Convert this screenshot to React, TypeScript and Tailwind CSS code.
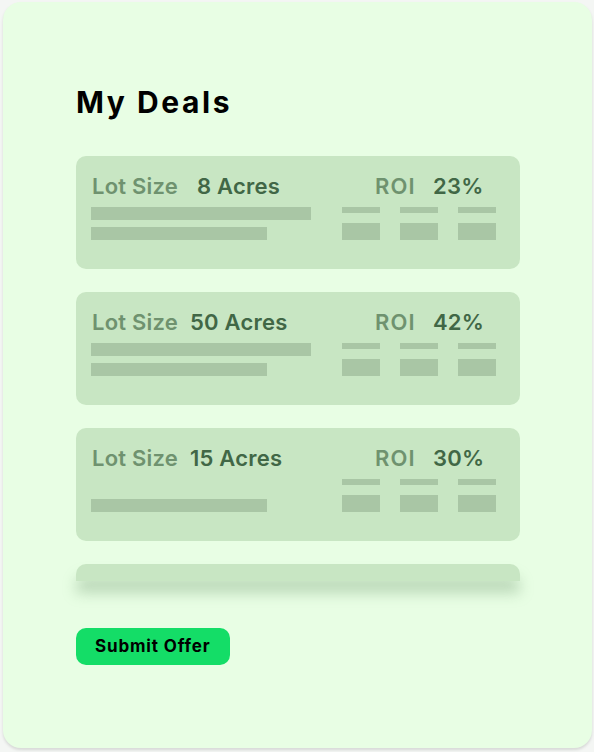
const deals = [
  { size: "8 Acres", roi: "23%", gap: "ml-[19px]", twoBars: true },
  { size: "50 Acres", roi: "42%", gap: "ml-[12px]", twoBars: true },
  { size: "15 Acres", roi: "30%", gap: "ml-[12px]", twoBars: false },
];

function DealCard({ deal }: { deal: (typeof deals)[number] }) {
  return (
    <div className="h-[113px] rounded-[10px] bg-[#c8e6c3] pl-[16px] pt-[16px]">
      <div className="flex h-[28px] items-center text-[22px] font-semibold leading-[28px] tracking-[0.01em]">
        <div className="flex w-[250px] items-center">
          <span className="inline-block w-[86px] whitespace-nowrap text-[#6f926f]">Lot Size</span>
          <span className={`${deal.gap} text-[#416746]`}>{deal.size}</span>
        </div>
        <div className="flex items-center pl-[33px]">
          <span className="inline-block w-[43px] tracking-[0.05em] text-[#6f926f]">ROI</span>
          <span className="ml-[15px] text-[#416746]">{deal.roi}</span>
        </div>
      </div>
      <div className="-ml-[1px] mt-[7px] flex">
        <div className="flex w-[220px] flex-col">
          <div className={`h-[13px] w-[220px] ${deal.twoBars ? "bg-[#a9c6a5]" : "bg-transparent"}`} />
          <div className="mt-[7px] h-[13px] w-[176px] bg-[#a9c6a5]" />
        </div>
        <div className="ml-[31px] flex gap-[20px]">
          {[0, 1, 2].map((i) => (
            <div key={i} className="flex w-[38px] flex-col">
              <div className="h-[6px] bg-[#a9c6a5]" />
              <div className="mt-[10px] h-[17px] bg-[#a9c6a5]" />
            </div>
          ))}
        </div>
      </div>
    </div>
  );
}

export default function App() {
  return (
    <div className="min-h-[752px] bg-[#f4f6f4] pb-[4px] pl-[3px] pr-[2px] pt-[2px]" style={{ fontFamily: "Inter, 'Noto Sans', sans-serif" }}>
      <div className="h-[746px] rounded-[18px] bg-[#e8fee4] pl-[73px] pt-[80px] shadow-[0_2px_3px_rgba(0,0,0,0.12)]">
        <h1 className="text-[30px] font-bold leading-[40px] tracking-[0.085em] text-black">My Deals</h1>
        <div className="mt-[34px] flex w-[444px] flex-col gap-[23px]">
          {deals.map((d) => (
            <DealCard key={d.size} deal={d} />
          ))}
          <div className="h-[17px] rounded-t-[10px] bg-[#c8e6c3] shadow-[0_12px_14px_rgba(120,160,120,0.4)]" />
        </div>
        <button className="mt-[47px] h-[37px] rounded-[10px] bg-[#14dd67] px-[19px] text-[17px] font-bold tracking-[0.05em] text-black">
          Submit Offer
        </button>
      </div>
    </div>
  );
}
